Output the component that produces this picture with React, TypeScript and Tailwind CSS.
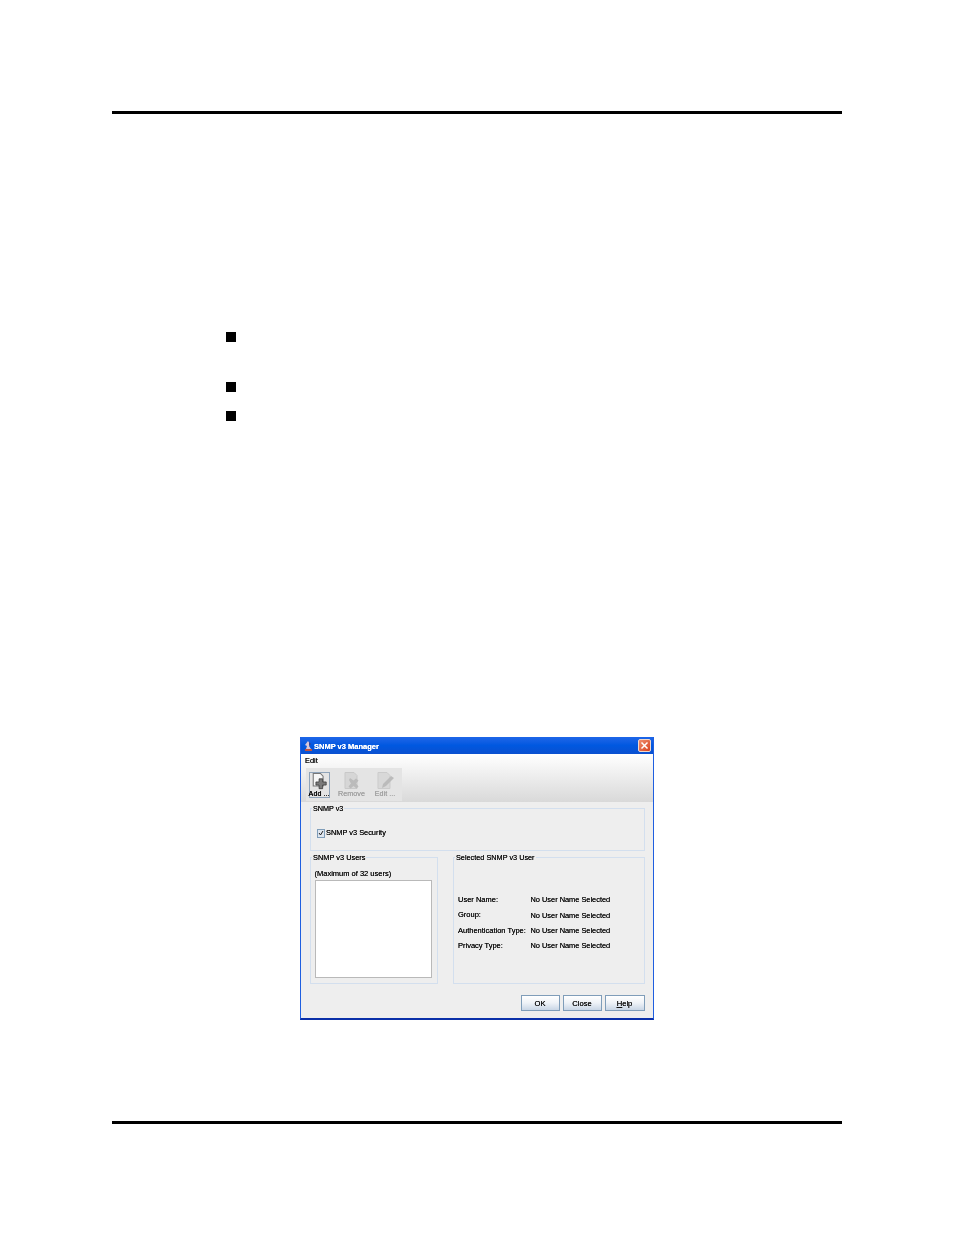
import React from "react";

const font = "font-['Liberation_Sans',Arial,sans-serif]";

function Group({ title, titleSize, className, children }: { title: string; titleSize: string; className: string; children?: React.ReactNode }) {
  return (
    <div className={`relative border-[1.5px] border-[#d3dfee] ${className}`}>
      <span className={`absolute left-[1.5px] top-[-5.5px] bg-[#eeeeee] px-[1px] leading-[10px] text-[#111] whitespace-nowrap ${titleSize}`}>{title}</span>
      {children}
    </div>
  );
}

function Info({ label }: { label: string }) {
  return (
    <div className="flex h-[15.4px] items-center text-[#111]">
      <span className="w-[72.5px] whitespace-nowrap text-[7.5px]">{label}</span>
      <span className="whitespace-nowrap text-[7.4px]">No User Name Selected</span>
    </div>
  );
}

function Btn({ children, w }: { children: React.ReactNode; w: string }) {
  return (
    <div className={`flex h-[16px] items-center justify-center border border-[#7f9db9] bg-gradient-to-b from-[#ffffff] via-[#eef2f7] to-[#c9d6e6] pt-[1px] text-[7.6px] text-[#111] ${w}`}>
      {children}
    </div>
  );
}

function AddIcon() {
  return (
    <svg width="19" height="19" viewBox="0 0 19 19">
      <path d="M2.500 .5h8l3 3v11h-11z" fill="#f6f6f6" stroke="#777" strokeWidth="1.200" />
      <path d="M9 6.500h4v3.500h4v3.500h-4v4H9v-4H5.500v-3.500H9z" fill="#7a7a7a" stroke="#333" strokeWidth="0.8" />
    </svg>
  );
}

function RemoveIcon() {
  return (
    <svg width="18" height="18" viewBox="0 0 18 18">
      <path d="M2 .5h9l3 3v13H2z" fill="#d6d6d6" stroke="#c8c8c8" />
      <path d="M7 6l3.500 2.500L13 6.500l2.500 2-2.500 3 2.500 3-2 2-3-2.500-3 2.500-2-2 2.500-3L6 8z" fill="#bbbbbb" />
    </svg>
  );
}

function EditIcon() {
  return (
    <svg width="18" height="18" viewBox="0 0 18 18">
      <path d="M2 .5h9l3 3v13H2z" fill="#d8d8d8" stroke="#cbcbcb" />
      <path d="M6 16l1-4 8-8 3 2-8 8z" fill="#bbbbbb" />
    </svg>
  );
}

function Tool({ label, icon, className }: { label: string; icon: React.ReactNode; className: string }) {
  return (
    <div className={`flex h-[26px] flex-col items-center ${className}`}>
      {icon}
      <span className="text-[7.2px] leading-[7px] whitespace-nowrap">{label}</span>
    </div>
  );
}

function Dialog() {
  return (
    <div className={`ml-[188px] flex h-[283px] w-[354px] flex-col border-x-[1.5px] border-b-[2px] border-x-[#1f5fe0] border-b-[#0a2fa8] bg-[#eeeeee] blur-[0.3px] [text-shadow:0_0_0.5px] ${font}`}>
      <div className="flex h-[17px] shrink-0 items-center bg-gradient-to-b from-[#1d66e8] via-[#0058e0] to-[#0a50d0] pl-[2px] pr-[2px]">
        <svg width="11" height="12" viewBox="0 0 11 12">
          <path d="M5 1l2 3-1 2 2 3H3l1-3-2-1z" fill="#d9c8d8" />
          <path d="M2 9h7v2H2z" fill="#c0503c" />
          <path d="M6 2l2 2-2 2z" fill="#3a3f8f" />
        </svg>
        <span className="pt-[2px] text-[7.5px] font-bold text-white">SNMP v3 Manager</span>
        <div className="ml-auto flex h-[13px] w-[13px] items-center justify-center rounded-[2px] border border-[#f0d8cc] bg-gradient-to-br from-[#ee8d6c] to-[#d8401c]">
          <svg width="9" height="9" viewBox="0 0 9 9"><path d="M1.500 1.500l6 6M7.500 1.500l-6 6" stroke="#fff" strokeWidth="1.500" /></svg>
        </div>
      </div>
      <div className="h-[48px] shrink-0 bg-gradient-to-b from-[#ffffff] to-[#d9d9d9]">
        <div className="h-[14px] pl-[4px] text-[7.4px] leading-[13px] text-[#111]">Edit</div>
        <div className="ml-[4.5px] flex h-[33px] w-[96px] items-center bg-[#e4e4e4] pl-[3px]">
          <Tool label="Add ..." icon={<AddIcon />} className="mr-[5px] w-[21px] border-[0.5px] border-[#8fa3b8] text-[#000]" />
          <Tool label="Remove" icon={<RemoveIcon />} className="w-[34px] text-[#a0a0a0]" />
          <Tool label="Edit ..." icon={<EditIcon />} className="w-[33px] text-[#a0a0a0]" />
        </div>
      </div>
      <div className="flex flex-1 flex-col px-[8.5px] pt-[6px]">
        <Group title="SNMP v3" titleSize="text-[7.2px]" className="flex h-[43px] items-center pl-[6px] pt-[7px]">
          <div className="flex h-[9px] w-[8px] items-center justify-center border border-[#7f9db9] bg-[#dfe6ef]">
            <svg width="6" height="6" viewBox="0 0 6 6"><path d="M1 3l1.500 2L5 1" stroke="#222" fill="none" /></svg>
          </div>
          <span className="ml-[1.5px] text-[7.4px] text-[#111]">SNMP v3 Security</span>
        </Group>
        <div className="mt-[6px] flex gap-[15px]">
          <Group title="SNMP v3 Users" titleSize="text-[7.4px]" className="flex h-[127px] w-[128px] flex-col px-[4px] pt-[9.5px]">
            <div className="text-[7.5px] leading-[11px] text-[#111] whitespace-nowrap">(Maximum of 32 users)</div>
            <div className="mt-[1.5px] h-[98px] w-[117px] border border-[#b9b9b9] bg-white" />
          </Group>
          <Group title="Selected SNMP v3 User" titleSize="text-[7.3px]" className="h-[127px] w-[192px] pl-[4.5px] pt-[34px]">
            <Info label="User Name:" />
            <Info label="Group:" />
            <Info label="Authentication Type:" />
            <Info label="Privacy Type:" />
          </Group>
        </div>
        <div className="mt-[11px] flex justify-end gap-[3px]">
          <Btn w="w-[39px]">OK</Btn>
          <Btn w="w-[39px]">Close</Btn>
          <Btn w="w-[40px]"><span><span className="underline">H</span>elp</span></Btn>
        </div>
      </div>
    </div>
  );
}

export default function App() {
  return (
    <div className="flex h-[1235px] w-[954px] flex-col bg-white px-[112px] pt-[111px]">
      <div className="h-[3px] w-[730px] shrink-0 bg-black" />
      <ul className="ml-[114px] mt-[218px] flex h-[89px] flex-col blur-[0.4px]">
        <li className="h-[9.5px] w-[10px] bg-black" />
        <li className="mt-[40.5px] h-[9.5px] w-[10px] bg-black" />
        <li className="mt-[19.5px] h-[9.5px] w-[10px] bg-black" />
      </ul>
      <div className="mt-[316px]"><Dialog /></div>
      <div className="mt-[101px] h-[3px] w-[730px] shrink-0 bg-black" />
    </div>
  );
}
